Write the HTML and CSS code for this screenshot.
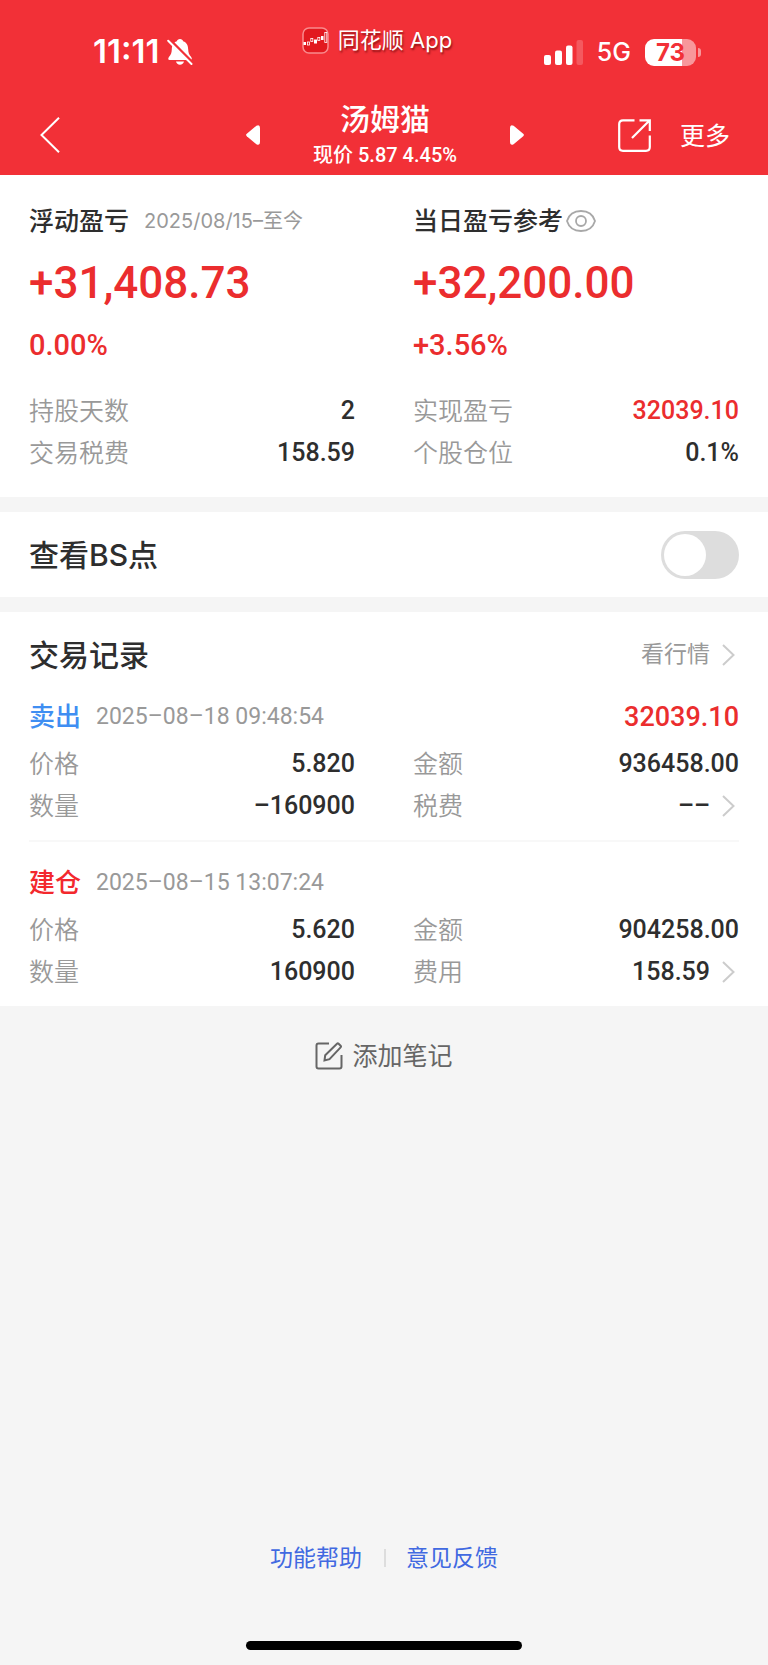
FILE: index.html
```html
<!DOCTYPE html>
<html lang="zh-CN">
<head>
<meta charset="utf-8">
<meta name="viewport" content="width=device-width, initial-scale=1">
<title>汤姆猫</title>
<link rel="stylesheet" href="styles.css">
</head>
<body>
<header class="header">
  <div class="status">
    <div class="status-time">
      <span>11:11</span>
      <svg width="26" height="28" viewBox="0 0 26 28" aria-hidden="true">
        <path d="M13 1c-1.700 0-2.800 1-3.100 2.200C6 4.500 4.900 7.600 4.800 11.500c-.1 3.500-1 5.300-2.700 7.200C.8 20.300 1 22 2.600 22h20.800c1.600 0 1.900-1.700.6-3.300-1.800-1.900-2.700-3.700-2.800-7.200-.1-3.900-1.200-7-5.100-8.300C15.800 2 14.700 1 13 1zM9 23.600h8c-.4 1.900-2 3.200-4 3.200s-3.600-1.300-4-3.200z" fill="#fff"/>
        <path d="M2.500 1.500 26 25" stroke="#f23037" stroke-width="3"/>
        <path d="M1.200 2.800 24.500 26" stroke="#fff" stroke-width="2" stroke-linecap="round"/>
      </svg>
    </div>
    <div class="status-app">
      <svg width="27" height="27" viewBox="0 0 27 27" aria-hidden="true">
        <rect x="1" y="1" width="25" height="25" rx="6" fill="#e2191f" stroke="#f98a8d" stroke-width="1.500"/>
        <g fill="#fff"><rect x="1.500" y="15" width="2.500" height="3"/><rect x="12" y="12.500" width="3" height="4"/><rect x="19" y="9" width="2.500" height="4"/></g>
        <g fill="none" stroke="#fff" stroke-width=".8"><rect x="5.500" y="15" width="2" height="3"/><rect x="8.800" y="11.500" width="2" height="3"/><rect x="15.800" y="10.500" width="2" height="3"/><rect x="22.800" y="5.500" width="2" height="10"/></g>
      </svg>
      <span>同花顺 App</span>
    </div>
    <div class="status-signal">
      <svg width="39" height="25" viewBox="0 0 39 25" aria-hidden="true">
        <g fill="#fff"><rect x="0" y="15" width="7" height="10" rx="2"/><rect x="11" y="10.500" width="7" height="14.500" rx="2"/><rect x="22" y="5.500" width="6.500" height="19.500" rx="2"/><rect x="32.500" y="0" width="6.500" height="25" rx="2" opacity=".2"/></g>
      </svg>
      <span class="network">5G</span>
      <span class="battery"><span class="battery-level">73</span></span>
    </div>
  </div>
  <nav class="nav">
    <button class="icon-button nav-back" aria-label="返回">
      <svg width="20" height="36" viewBox="0 0 20 36" fill="none" stroke="#fff" stroke-width="2"><path d="M19 .8 1.500 18 19 35.200"/></svg>
    </button>
    <div class="stock">
      <button class="icon-button" aria-label="上一只">
        <svg width="14" height="20" viewBox="0 0 14 20"><path d="M.8 8.800 10.400.7Q14-1 14 3v14q0 4-3.600 2.300L.8 11.200Q-.6 10 .8 8.800z" fill="#fff"/></svg>
      </button>
      <div class="stock-text">
        <h1 class="stock-name">汤姆猫</h1>
        <p class="stock-price">现价 5.87 4.45%</p>
      </div>
      <button class="icon-button" aria-label="下一只">
        <svg width="14" height="20" viewBox="0 0 14 20"><path d="M13.200 8.800 3.600.7Q0-1 0 3v14q0 4 3.600 2.300l9.600-8.100q1.400-1.200 0-2.400z" fill="#fff"/></svg>
      </button>
    </div>
    <div class="nav-actions">
      <button class="icon-button" aria-label="分享">
        <svg width="33" height="33" viewBox="0 0 33 33" fill="none" stroke="#fff" stroke-width="2.200"><path d="M16.500 1.300H5Q1.200 1.300 1.200 5v23q0 3.800 3.800 3.800h23q3.800 0 3.800-3.800V16.500M21.500 1.300h10.300V12M31 2 14 19"/></svg>
      </button>
      <button class="more">更多</button>
    </div>
  </nav>
</header>

<main>
  <section class="panel summary">
    <div class="column">
      <h2 class="summary-title">浮动盈亏 <span class="summary-range">2025/08/15–至今</span></h2>
      <p class="profit">+31,408.73</p>
      <p class="percent">0.00%</p>
      <dl class="facts">
        <div class="fact"><dt>持股天数</dt><dd>2</dd></div>
        <div class="fact"><dt>交易税费</dt><dd>158.59</dd></div>
      </dl>
    </div>
    <div class="column">
      <h2 class="summary-title eye-title">当日盈亏参考
        <button class="icon-button" aria-label="显示或隐藏">
          <svg width="30" height="22" viewBox="0 0 30 22" fill="none" stroke="#a8a8a8" stroke-width="1.800"><path d="M1 11C3 4.500 8.500 1 15 1s12 3.500 14 10c-2 6.500-7.500 10-14 10S3 17.500 1 11z"/><circle cx="15" cy="11" r="5"/></svg>
        </button>
      </h2>
      <p class="profit">+32,200.00</p>
      <p class="percent">+3.56%</p>
      <dl class="facts">
        <div class="fact"><dt>实现盈亏</dt><dd class="up">32039.10</dd></div>
        <div class="fact"><dt>个股仓位</dt><dd>0.1%</dd></div>
      </dl>
    </div>
  </section>

  <section class="panel switch-row">
    <label class="section-title" for="bs">查看BS点</label>
    <input class="switch" id="bs" type="checkbox" role="switch">
  </section>

  <section class="panel records">
    <div class="records-head">
      <h2 class="section-title">交易记录</h2>
      <a class="market" href="#market">看行情
        <svg class="arrow" width="13" height="22" viewBox="0 0 13 22"><path d="M1 1l10.500 10L1 21"/></svg>
      </a>
    </div>
    <article class="record">
      <div class="record-head">
        <h3 class="action sell">卖出</h3>
        <time>2025–08–18 09:48:54</time>
        <strong class="record-profit">32039.10</strong>
      </div>
      <dl class="facts two">
        <div class="fact"><dt>价格</dt><dd>5.820</dd></div>
        <div class="fact"><dt>金额</dt><dd>936458.00</dd></div>
        <div class="fact"><dt>数量</dt><dd>–160900</dd></div>
        <div class="fact"><dt>税费</dt><dd class="linked">–– <svg class="arrow" width="13" height="22" viewBox="0 0 13 22"><path d="M1 1l10.500 10L1 21"/></svg></dd></div>
      </dl>
    </article>
    <article class="record">
      <div class="record-head">
        <h3 class="action open">建仓</h3>
        <time>2025–08–15 13:07:24</time>
      </div>
      <dl class="facts two">
        <div class="fact"><dt>价格</dt><dd>5.620</dd></div>
        <div class="fact"><dt>金额</dt><dd>904258.00</dd></div>
        <div class="fact"><dt>数量</dt><dd>160900</dd></div>
        <div class="fact"><dt>费用</dt><dd class="linked">158.59 <svg class="arrow" width="13" height="22" viewBox="0 0 13 22"><path d="M1 1l10.500 10L1 21"/></svg></dd></div>
      </dl>
    </article>
  </section>

  <button class="note">
    <svg width="28" height="28" viewBox="0 0 28 28" fill="none" stroke="#666" stroke-width="2"><path d="M14 1.500H3.500q-2 0-2 2v21q0 2 2 2h21q2 0 2-2V13M9.500 18.500l.7-5.200L22 1.800q.8-.8 1.600 0l2 2q.8.800 0 1.600L14.500 17.200z"/></svg>
    添加笔记
  </button>
</main>

<footer class="footer">
  <div class="footer-links">
    <a href="#help">功能帮助</a>
    <a href="#feedback">意见反馈</a>
  </div>
  <div class="home-bar"></div>
</footer>
</body>
</html>
```

FILE: styles.css
```css
* {
  box-sizing: border-box;
  margin: 0;
  padding: 0;
}

body {
  display: flex;
  flex-direction: column;
  min-height: 100vh;
  background: #f5f5f5;
  color: #2e2e2e;
  font-family: Inter, "Noto Sans CJK SC", sans-serif;
  font-size: 25px;
  line-height: 1.2;
}

button {
  border: 0;
  background: none;
  color: inherit;
  font: inherit;
  cursor: pointer;
}

a {
  text-decoration: none;
}

svg {
  display: block;
  flex: none;
}

.icon-button {
  display: block;
  line-height: 0;
}

.header {
  padding: 24px 38px 3px 40px;
  background: #f23037;
  color: #fff;
}

.status,
.nav {
  display: grid;
  grid-template-columns: 1fr auto 1fr;
  align-items: center;
}

.status {
  height: 56px;
}

.status-time {
  display: flex;
  align-items: center;
  gap: 8px;
  padding-left: 53px;
  font-size: 33px;
  font-weight: 600;
}

.status-app {
  display: flex;
  align-items: center;
  align-self: start;
  gap: 9px;
  height: 32px;
  padding-right: 16px;
  font-size: 22px;
  text-shadow: 1px 2px 2px rgba(80, 0, 0, .6);
}

.status-signal {
  display: flex;
  align-items: center;
  justify-content: flex-end;
  gap: 14px;
  padding-right: 34px;
}

.network {
  font-weight: 500;
}

.battery {
  position: relative;
  width: 51px;
  height: 27px;
  border-radius: 9px;
  background: linear-gradient(90deg, #fff 73%, #f8979b 73%);
}

.battery::after {
  content: "";
  position: absolute;
  top: 9px;
  right: -5px;
  width: 3px;
  height: 9px;
  border-radius: 0 4px 4px 0;
  background: #f8979b;
}

.battery-level {
  display: block;
  color: #f23037;
  font-size: 24px;
  font-weight: 700;
  line-height: 27px;
  text-align: center;
}

.nav {
  height: 92px;
}

.nav-back {
  justify-self: start;
  margin-top: 18px;
}

.stock {
  display: flex;
  align-items: center;
  justify-content: space-between;
  width: 278px;
}

.stock .icon-button {
  margin-top: 18px;
}

.stock-text {
  padding-top: 18px;
  text-align: center;
}

.stock-name {
  font-size: 30px;
  font-weight: 500;
  line-height: 40px;
}

.stock-price {
  font-family: Roboto, "Noto Sans CJK SC", sans-serif;
  font-size: 20px;
  font-weight: 500;
  line-height: 32px;
}

.nav-actions {
  display: flex;
  align-items: center;
  justify-content: flex-end;
  gap: 29px;
  margin-top: 19px;
}

.more {
  line-height: 36px;
}

.panel {
  padding-right: 29px;
  padding-left: 29px;
  background: #fff;
}

.summary {
  display: grid;
  grid-template-columns: 1fr 1fr;
  gap: 58px;
  padding-top: 28px;
  padding-bottom: 23px;
}

.summary-title {
  display: flex;
  align-items: center;
  gap: 15px;
  height: 36px;
  font-size: 25px;
  font-weight: 500;
  white-space: nowrap;
}

.eye-title {
  gap: 3px;
}

.summary-range {
  color: #999;
  font-size: 20px;
  font-weight: 400;
}

.profit,
.percent,
.facts dd,
.record-profit,
time {
  font-family: Roboto, "Noto Sans CJK SC", sans-serif;
}

.profit {
  margin-top: 16px;
  color: #eb2d2e;
  font-size: 44px;
  font-weight: 500;
  line-height: 56px;
}

.percent {
  margin-top: 14px;
  color: #eb2d2e;
  font-size: 29px;
  font-weight: 500;
  line-height: 40px;
}

.facts {
  display: grid;
}

.percent + .facts {
  margin-top: 25px;
}

.two {
  grid-template-columns: 1fr 1fr;
  column-gap: 58px;
}

.fact {
  display: flex;
  align-items: center;
  justify-content: space-between;
  height: 42px;
}

.facts dt {
  color: #999;
  font-weight: 350;
}

.facts dd {
  font-weight: 500;
}

.facts .up {
  color: #eb2d2e;
}

.linked,
.market {
  display: flex;
  align-items: center;
  gap: 12px;
  padding-right: 4px;
}

.arrow {
  fill: none;
  stroke: #ccc;
  stroke-width: 2;
}

.switch-row,
.records {
  margin-top: 15px;
}

.switch-row {
  display: flex;
  align-items: center;
  justify-content: space-between;
  height: 85px;
}

.section-title {
  font-size: 30px;
  font-weight: 500;
}

.switch {
  width: 78px;
  height: 48px;
  padding: 3px;
  border-radius: 24px;
  background: #ddd;
  appearance: none;
  cursor: pointer;
}

.switch::before {
  content: "";
  display: block;
  width: 42px;
  height: 42px;
  border-radius: 50%;
  background: #fff;
}

.switch:checked {
  background: #eb2d2e;
}

.switch:checked::before {
  margin-left: auto;
}

.records {
  padding-top: 22px;
}

.records-head {
  display: flex;
  align-items: center;
  justify-content: space-between;
  height: 42px;
}

.market {
  color: #999;
  font-size: 23px;
}

.record {
  padding-top: 20px;
  padding-bottom: 13px;
}

.record + .record {
  border-top: 2px solid #f8f8f8;
}

.record-head {
  display: flex;
  align-items: center;
  gap: 15px;
  height: 42px;
  margin-bottom: 5px;
}

.action {
  font-size: 26px;
  font-weight: 500;
}

.sell {
  color: #3f8ef2;
}

.open {
  color: #f3282d;
}

time {
  color: #999;
  font-size: 23px;
}

.record-profit {
  margin-left: auto;
  color: #eb2d2e;
  font-size: 27px;
  font-weight: 500;
}

.note {
  display: flex;
  align-items: center;
  gap: 9px;
  margin: 30px auto;
  color: #666;
  line-height: 40px;
}

.footer {
  margin-top: auto;
  padding-bottom: 15px;
}

.footer-links {
  display: flex;
  justify-content: center;
  font-size: 23px;
  line-height: 36px;
}

.footer-links a {
  padding: 0 22px;
  color: #4169e1;
}

.footer-links a + a {
  background: linear-gradient(#ddd, #ddd) left center / 2px 18px no-repeat;
}

.home-bar {
  width: 36%;
  height: 9px;
  margin: 65px auto 0;
  border-radius: 5px;
  background: #000;
}
```
